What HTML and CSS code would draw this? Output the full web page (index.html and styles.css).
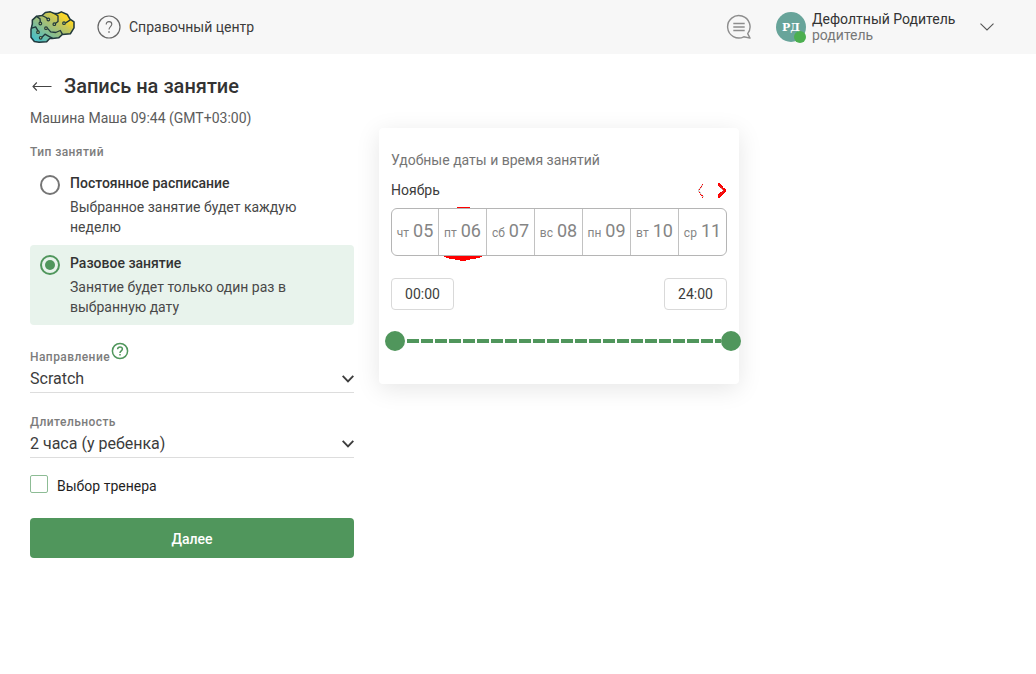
FILE: index.html
```html
<!DOCTYPE html>
<html lang="ru">
<head>
<meta charset="utf-8">
<title>Запись на занятие</title>
<link rel="stylesheet" href="styles.css">
</head>
<body>
<header class="header">
  <svg class="logo" viewBox="30 33 135 95" width="45" height="32">
    <defs><linearGradient id="brain" x1="0" y1="1" x2="1" y2="0"><stop offset="0" stop-color="#35bfd8"/><stop offset=".42" stop-color="#92bd86"/><stop offset=".65" stop-color="#c5c65a"/><stop offset=".78" stop-color="#f5d52c"/><stop offset="1" stop-color="#ffd51f"/></linearGradient></defs>
    <g stroke="#21393c" stroke-width="4.6" stroke-linejoin="round" stroke-linecap="round">
      <path fill="url(#brain)" d="M33 88 37 71 37 60 50 48 66 46 76 37 91 35 103 40 113 40 124 35 142 43 150 57 162 65 162 83 151 101 127 103 116 113 97 115 89 115 80 125 57 126 43 124 33 111Z"/>
      <path fill="none" stroke-width="4" d="M35 84 47 80 54 92M50 49 60 56 61 66M66 46 78 52 82 56M103 40 114 47 114 64 106 70M82 84 92 95 107 97 121 91 127 102M137 68 150 60M66 111 75 102 84 107 97 114"/>
      <g fill="#b3c673" stroke-width="3.4"><circle cx="61" cy="70" r="4"/><circle cx="85" cy="58" r="4"/><circle cx="103" cy="72" r="4"/><circle cx="78" cy="84" r="4"/><circle cx="132" cy="69" r="4"/><circle cx="54" cy="96" r="4"/><circle cx="62" cy="113" r="4"/></g>
    </g>
  </svg>
  <a class="help">
    <svg width="24" height="24" viewBox="0 0 24 24" fill="none" stroke="#666"><circle cx="12" cy="12" r="11" stroke-width="1.2"/><path d="M9.2 9.4C9.2 7.7 10.3 6.6 12 6.6s2.8 1.1 2.8 2.7c0 2.2-2.8 2.4-2.8 5.2" stroke-width="1.1"/><path d="M12 16.2v1.6" stroke-width="1.4"/></svg>
    <span>Справочный центр</span>
  </a>
  <svg class="chat" width="26" height="26" viewBox="0 0 26 26" fill="none" stroke="#8d8d8d" stroke-width="1.4"><path d="M21.7 19.6A11.2 11.2 0 1 0 17.8 22.8L24 24.1Z" stroke-linejoin="round"/><path d="M7.3 9.5h11.4M7.3 13h11.4M7.3 16.5h11.4"/></svg>
  <div class="avatar">РД<span class="online"></span></div>
  <div class="user"><div class="user-name">Дефолтный Родитель</div><div class="user-role">родитель</div></div>
  <svg class="menu" width="14" height="8" viewBox="0 0 14 8" fill="none" stroke="#555" stroke-width="1.1"><path d="M.5.6 7 7 13.5.6"/></svg>
</header>
<main class="main">
  <section class="form">
    <div class="title-row">
      <svg width="20" height="10" viewBox="0 0 20 10" fill="none" stroke="#444" stroke-width="1.1"><path d="M19.5 5.5H1M4.8 1.5 1 5.5 4.8 9.5"/></svg>
      <h1 class="title">Запись на занятие</h1>
    </div>
    <p class="student">Машина Маша 09:44 (GMT+03:00)</p>
    <div class="label">Тип занятий</div>
    <div class="option">
      <span class="radio"></span>
      <div><div class="option-title">Постоянное расписание</div><div class="option-text">Выбранное занятие будет каждую неделю</div></div>
    </div>
    <div class="option selected">
      <span class="radio"></span>
      <div><div class="option-title">Разовое занятие</div><div class="option-text">Занятие будет только один раз в выбранную дату</div></div>
    </div>
    <div class="label direction-label">Направление<svg class="hint" width="18" height="18" viewBox="0 0 18 18" fill="none" stroke="#50965c"><circle cx="9" cy="9" r="7.6" stroke-width="1.5"/><path d="M6.6 7.2C6.6 5.7 7.6 4.9 9 4.9s2.4.8 2.4 2.2c0 1.7-2.4 1.8-2.4 3.8M9 12v1.6" stroke-width="1.5"/></svg></div>
    <div class="select"><span>Scratch</span><svg width="12" height="8" viewBox="0 0 12 8" fill="none" stroke="#3d3d3d" stroke-width="1.9"><path d="M.7.9 6 6.3 11.3.9"/></svg></div>
    <div class="label duration-label">Длительность</div>
    <div class="select"><span>2 часа (у ребенка)</span><svg width="12" height="8" viewBox="0 0 12 8" fill="none" stroke="#3d3d3d" stroke-width="1.9"><path d="M.7.9 6 6.3 11.3.9"/></svg></div>
    <label class="check"><span class="box"></span><span>Выбор тренера</span></label>
    <button class="next">Далее</button>
  </section>
  <section class="card">
    <div class="card-title">Удобные даты и время занятий</div>
    <div class="month"><span>Ноябрь</span>
      <svg width="32" height="16" viewBox="0 0 32 16" shape-rendering="crispEdges" fill="none"><path d="M8 1.5 3.5 7.5 8 14" stroke="#ccc" stroke-width="1.5"/><path d="M7 1h1v1H7zM6 3h1v1H6zM5 4h1v1H5zM4 6h1v1H4zM4 9h1v1H4zM5 11h1v1H5zM6 12h2v1H6zM7 14h1v1H7z" fill="#f00"/><path d="M23 0h2l1 2 2 1v2l3 1v3l-3 2-1 2-2 1-1 1h-1v-4l3-2 2-2-2-2-3-2z" fill="#f00"/><path d="M24 2l5 6-5 5" stroke="#b44" stroke-width=".7"/></svg>
    </div>
    <div class="days">
      <div class="day"><small>чт</small> 05</div>
      <div class="day"><small>пт</small> 06<svg class="mark" width="40" height="54" viewBox="0 0 40 54" shape-rendering="crispEdges" fill="#f00"><path d="M14 0h13v1H14z"/><path d="M1 49h38v1h-2v1h-4v1h-6v1h-4v1h-6v-1h-5v-1H6v-1H3v-1H1z"/></svg></div>
      <div class="day"><small>сб</small> 07</div>
      <div class="day"><small>вс</small> 08</div>
      <div class="day"><small>пн</small> 09</div>
      <div class="day"><small>вт</small> 10</div>
      <div class="day"><small>ср</small> 11</div>
    </div>
    <div class="times"><span class="time">00:00</span><span class="time">24:00</span></div>
    <div class="slider"><span class="knob"></span><span class="track"></span><span class="knob"></span></div>
  </section>
</main>
</body>
</html>
```
FILE: styles.css
```css
* { box-sizing: border-box; }
body { margin: 0; background: #fff; color: #3c3c3c; font-family: Roboto, "Liberation Sans", sans-serif; font-size: 14px; overflow: hidden; }
svg { display: block; flex: none; }
.header { display: flex; align-items: center; height: 54px; padding: 0 42px 0 30px; background: #f7f7f7; }
.help { display: flex; align-items: center; gap: 8px; margin-left: 22px; }
.chat { margin-left: auto; margin-right: 24px; }
.avatar { position: relative; display: flex; align-items: center; justify-content: center; width: 30px; height: 30px; border-radius: 50%; background: #68a49a; color: #fff; font: bold 11px "DejaVu Serif", serif; }
.online { position: absolute; right: 0; bottom: -1px; width: 12px; height: 12px; border-radius: 50%; background: #4caf50; }
.user { width: 168px; margin-left: 6px; line-height: 16px; }
.user-name { color: #333; }
.user-role { color: #777; }
.main { display: flex; align-items: flex-start; gap: 25px; padding-left: 30px; }
.form { width: 324px; padding-top: 20px; }
.title-row { display: flex; align-items: center; gap: 12px; height: 24px; padding-left: 2px; }
.title { margin: 0; font-size: 20px; font-weight: 500; line-height: 24px; color: #333; }
.student { margin: 10px 0 0; line-height: 20px; color: #5c5c5c; }
.label { height: 16px; font-size: 12px; font-weight: 500; line-height: 16px; letter-spacing: .43px; color: #7c7c7c; }
.student + .label { margin: 16px 0 5px; }
.option { display: flex; gap: 9px; height: 80px; padding: 8px 10px; border-radius: 4px; }
.option.selected { background: #e8f3ec; }
.radio { flex: none; display: flex; align-items: center; justify-content: center; width: 20px; height: 20px; margin-top: 2px; margin-right: 1px; border: 2px solid #757575; border-radius: 50%; }
.selected .radio { border-color: #50965c; }
.selected .radio::after { content: ""; width: 10px; height: 10px; border-radius: 50%; background: #50965c; }
.option-title { line-height: 20px; margin-bottom: 4px; font-weight: 500; color: #333; }
.option-text { width: 250px; line-height: 20px; color: #484848; }
.direction-label { display: flex; margin-top: 24px; }
.hint { margin: -7px 0 0 1px; }
.select { display: flex; align-items: center; justify-content: space-between; height: 28px; border-bottom: 1px solid #ddd; font-size: 16px; color: #3c3c3c; }
.duration-label { margin: 21px 0 0; }
.check { display: flex; align-items: center; gap: 9px; height: 20px; margin-top: 18px; color: #1f1f1f; }
.box { width: 18px; height: 18px; margin-top: -4px; border: 1px solid #8dbc95; border-radius: 2px; }
.next { display: block; width: 324px; height: 40px; margin-top: 22px; padding: 1px 0 0; border: 0; border-radius: 4px; background: #50965c; color: #fff; font: 500 14px Roboto, sans-serif; }
.card { width: 360px; height: 256px; margin-top: 74px; padding: 22px 12px 0; border-radius: 4px; background: #fff; box-shadow: 0 5px 25px rgba(0, 0, 0, .1); }
.card-title { line-height: 20px; color: #757575; }
.month { display: flex; align-items: center; justify-content: space-between; height: 20px; margin-top: 10px; }
.month svg { margin-top: 1px; }
.days { display: flex; height: 48px; margin-top: 8px; border: 1px solid #b5b5b5; border-radius: 6px; }
.day { position: relative; flex: 1; display: flex; align-items: baseline; justify-content: center; gap: 4px; padding-top: 11px; font-size: 18px; line-height: 22px; color: #858585; }
.day:first-child { flex: 0 0 46px; }
.day + .day { border-left: 1px solid #c2c2c2; }
.day small { font-size: 12px; }
.mark { position: absolute; left: 4px; top: -2px; }
.times { display: flex; justify-content: space-between; margin-top: 22px; }
.time { display: flex; align-items: center; justify-content: center; width: 63px; height: 32px; border: 1px solid #d9d9d9; border-radius: 4px; }
.slider { display: flex; align-items: center; height: 20px; margin: 21px -14px 0 -6px; }
.knob { flex: none; width: 20px; height: 20px; border-radius: 50%; background: #50965c; }
.track { flex: 1; height: 4px; background: repeating-linear-gradient(90deg, transparent 0 2px, #50965c 2px 14px); }
```
